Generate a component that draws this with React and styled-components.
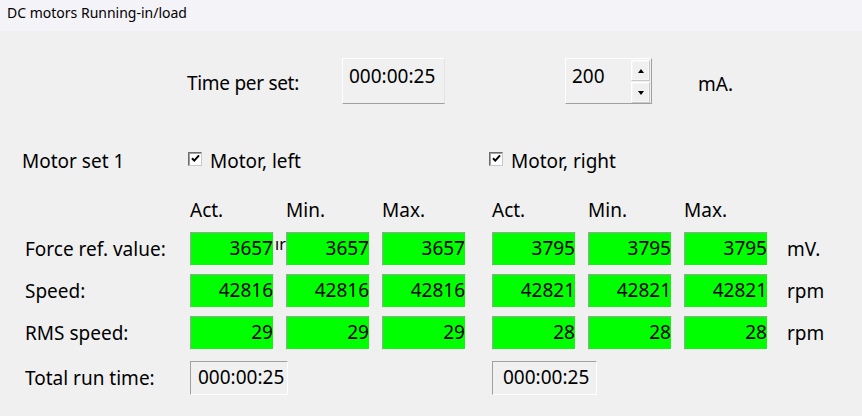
import React from 'react'
import styled, { createGlobalStyle } from 'styled-components'

const GlobalStyle = createGlobalStyle`
    html, body {
        margin: 0;
        padding: 0;
        background-color: #f0f0f0;
    }
    body {
        font-family: "Noto Sans", "Open Sans", sans-serif;
        color: #000;
    }
`

const leftValues = [
    { act: 3657, min: 3657, max: 3657 },
    { act: 42816, min: 42816, max: 42816 },
    { act: 29, min: 29, max: 29 },
]

const rightValues = [
    { act: 3795, min: 3795, max: 3795, unit: 'mV.' },
    { act: 42821, min: 42821, max: 42821, unit: 'rpm' },
    { act: 28, min: 28, max: 28, unit: 'rpm' },
]

const rowLabels = ['Force ref. value:', 'Speed:', 'RMS speed:']

function CheckBox({ label }) {
    return (
        <CheckWrap>
            <CheckSquare>
                <svg width="11" height="11" viewBox="0 0 11 11">
                    <path d="M2 5.2 L4.3 7.6 L9 2.4" fill="none" stroke="#000" strokeWidth="2" />
                </svg>
            </CheckSquare>
            <CheckText>{label}</CheckText>
        </CheckWrap>
    )
}

function App() {
    return (
        <Window>
            <GlobalStyle />
            <TitleBar>DC motors Running-in/load</TitleBar>
            <TopRow>
                <TopLabel>Time per set:</TopLabel>
                <TimeButton>000:00:25</TimeButton>
                <Spinner>
                    <SpinValue>200</SpinValue>
                    <SpinButtons>
                        <SpinButton><Arrow up /></SpinButton>
                        <SpinButton><Arrow /></SpinButton>
                    </SpinButtons>
                </Spinner>
                <UnitTop>mA.</UnitTop>
            </TopRow>
            <SetRow>
                <SetLabel>Motor set 1</SetLabel>
                <CheckCol>
                    <CheckBox label="Motor, left" />
                </CheckCol>
                <CheckBox label="Motor, right" />
            </SetRow>
            <Table>
                <HiddenText>ır</HiddenText>
                <span />
                <Header>Act.</Header>
                <Header>Min.</Header>
                <Header>Max.</Header>
                <span />
                <Header>Act.</Header>
                <Header>Min.</Header>
                <Header>Max.</Header>
                <span />
                {rowLabels.map((label, i) => (
                    <React.Fragment key={label}>
                        <RowLabel>{label}</RowLabel>
                        <Cell>{leftValues[i].act}</Cell>
                        <Cell>{leftValues[i].min}</Cell>
                        <Cell>{leftValues[i].max}</Cell>
                        <span />
                        <Cell>{rightValues[i].act}</Cell>
                        <Cell>{rightValues[i].min}</Cell>
                        <Cell>{rightValues[i].max}</Cell>
                        <Unit>{rightValues[i].unit}</Unit>
                    </React.Fragment>
                ))}
                <RowLabel last>Total run time:</RowLabel>
                <TotalBox $col="2 / span 3" $width={98} $pad={7}>000:00:25</TotalBox>
                <TotalBox $col="6 / span 3" $width={105} $pad={10}>000:00:25</TotalBox>
            </Table>
        </Window>
    )
}

export default App

const Window = styled.div`
    width: 862px;
    height: 416px;
    overflow: hidden;
    background-color: #f0f0f0;
    font-size: 19px;
    line-height: 26px;
`

const TitleBar = styled.div`
    height: 31px;
    box-sizing: border-box;
    padding: 3px 0 0 7px;
    font-size: 14px;
    line-height: 20px;
    background-color: #f4f3f8;
`

const TopRow = styled.div`
    display: flex;
    align-items: flex-start;
    margin-top: 27px;
    padding-left: 187px;
    height: 46px;
`

const TopLabel = styled.div`
    width: 155px;
    padding-top: 12px;
    letter-spacing: -0.3px;
`

const TimeButton = styled.div`
    width: 103px;
    height: 46px;
    box-sizing: border-box;
    padding: 4px 0 0 6px;
    border-top: 1px solid #ffffff;
    border-left: 1px solid #ffffff;
    border-bottom: 1px solid #a0a0a0;
    border-right: 1px solid #e3e3e3;
`

const Spinner = styled.div`
    display: flex;
    width: 87px;
    height: 46px;
    box-sizing: border-box;
    margin-left: 120px;
    border-top: 1px solid #ffffff;
    border-left: 1px solid #ffffff;
    border-bottom: 1px solid #a0a0a0;
    border-right: 1px solid #a0a0a0;
`

const SpinValue = styled.div`
    flex: 1;
    padding: 4px 0 0 6px;
`

const SpinButtons = styled.div`
    display: flex;
    flex-direction: column;
    gap: 1px;
    width: 19px;
    padding: 1px 1px 0 0;
`

const SpinButton = styled.div`
    flex: 1;
    display: flex;
    align-items: center;
    justify-content: center;
    background-color: #f0f0f0;
    border: 1px solid #c8c8c8;
    border-top-color: #ffffff;
    border-left-color: #ffffff;
    box-shadow: inset 0 0 0 1px #f6f6f6;
`

const Arrow = styled.span`
    width: 0;
    height: 0;
    border-left: 3px solid transparent;
    border-right: 3px solid transparent;
    border-top: ${p => (p.up ? '0' : '4px solid #000')};
    border-bottom: ${p => (p.up ? '4px solid #000' : '0')};
`

const UnitTop = styled.div`
    margin-left: 46px;
    padding-top: 13px;
`

const SetRow = styled.div`
    display: flex;
    align-items: center;
    margin-top: 44px;
    padding-left: 22px;
`

const SetLabel = styled.div`
    width: 166px;
`

const CheckCol = styled.div`
    width: 301px;
`

const CheckWrap = styled.label`
    display: flex;
    align-items: center;
`

const CheckSquare = styled.span`
    display: flex;
    align-items: center;
    justify-content: center;
    width: 14px;
    height: 14px;
    box-sizing: border-box;
    margin-top: -5px;
    background-color: #fff;
    border-top: 1px solid #6d6d6d;
    border-left: 1px solid #6d6d6d;
    border-bottom: 1px solid #c9c9c9;
    border-right: 1px solid #c9c9c9;
    box-shadow: inset 1px 1px 0 #a0a0a0;
`

const CheckText = styled.span`
    margin-left: 8px;
`

const Table = styled.div`
    position: relative;
    display: grid;
    grid-template-columns: 153px 84px 84px 84px 2px 84px 84px 84px auto;
    grid-auto-rows: 34px;
    grid-template-rows: 27px;
    column-gap: 12px;
    row-gap: 8px;
    margin-top: 23px;
    padding-left: 25px;
`

const Header = styled.div`
    line-height: 26px;
`

const RowLabel = styled.div`
    align-self: center;
    margin-top: ${p => (p.last ? '5px' : '0')};
`

const Cell = styled.div`
    box-sizing: border-box;
    height: 34px;
    padding: 2px 0 0 0;
    text-align: right;
    background-color: #00ff00;
    border-top: 1px solid #a0a0a0;
    border-left: 1px solid #a0a0a0;
    border-bottom: 1px solid #ffffff;
    border-right: 1px solid #ffffff;
`

const Unit = styled.div`
    align-self: center;
    padding-left: 7px;
`

const TotalBox = styled.div`
    grid-column: ${p => p.$col};
    width: ${p => p.$width}px;
    box-sizing: border-box;
    height: 34px;
    margin-top: 3px;
    padding: 2px 0 0 ${p => p.$pad}px;
    border-top: 1px solid #a0a0a0;
    border-left: 1px solid #a0a0a0;
    border-bottom: 1px solid #ffffff;
    border-right: 1px solid #ffffff;
`

const HiddenText = styled.span`
    position: absolute;
    left: 275px;
    top: 39px;
    font-size: 16px;
    line-height: 16px;
    z-index: 0;
`
